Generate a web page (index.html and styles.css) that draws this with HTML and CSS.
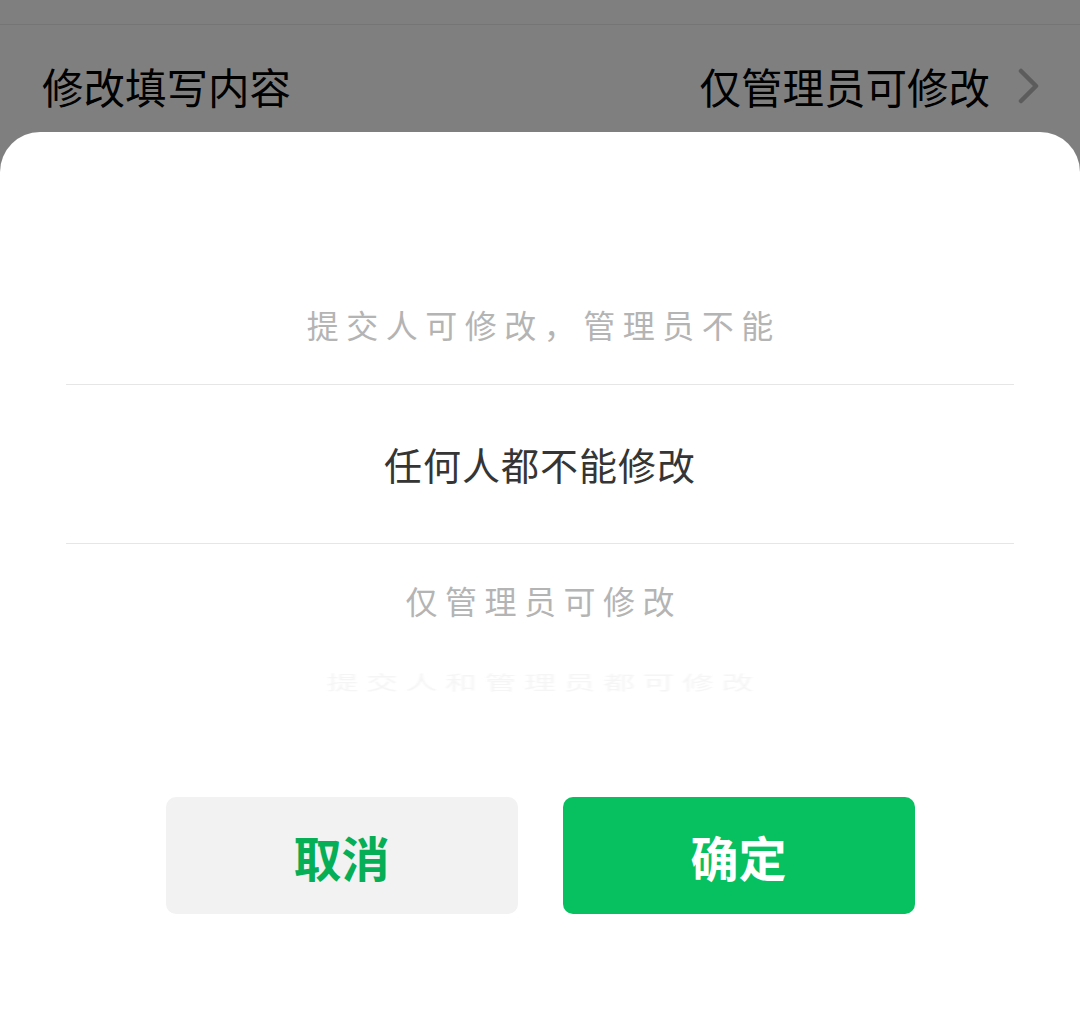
FILE: index.html
```html
<!DOCTYPE html>
<html lang="zh-CN">
<head>
<meta charset="utf-8">
<title>修改填写内容</title>
<link rel="stylesheet" href="styles.css">
</head>
<body>
<div class="screen">
  <div class="backdrop">
    <div class="prev-row"></div>
    <div class="setting-row">
      <span class="setting-label">修改填写内容</span>
      <span class="setting-value">仅管理员可修改
        <svg class="chevron" width="22" height="36" viewBox="0 0 22 36"><polyline points="3,3 18,18 3,33" fill="none" stroke="#5c5c5c" stroke-width="4.5" stroke-linecap="round" stroke-linejoin="round"/></svg>
      </span>
    </div>
  </div>
  <div class="sheet">
    <div class="picker">
      <div class="opt far">提交人可修改，管理员不能</div>
      <div class="opt sel">任何人都不能修改</div>
      <div class="opt far">仅管理员可修改</div>
      <div class="opt faint">提交人和管理员都可修改</div>
    </div>
    <div class="actions">
      <button class="btn cancel">取消</button>
      <button class="btn confirm">确定</button>
    </div>
  </div>
</div>
</body>
</html>
```

FILE: styles.css
```css
html, body {
  margin: 0;
  padding: 0;
}
body {
  width: 1080px;
  height: 1023px;
  overflow: hidden;
  background: #7f7f7f;
  font-family: "Noto Sans CJK SC", "Noto Sans", sans-serif;
}
.screen {
  display: flex;
  flex-direction: column;
  height: 1023px;
}
.backdrop {
  height: 132px;
  background: #7f7f7f;
  display: flex;
  flex-direction: column;
}
.prev-row {
  height: 24px;
  border-bottom: 1px solid #757575;
}
.setting-row {
  flex: 1;
  display: flex;
  align-items: center;
  justify-content: space-between;
  padding: 15px 40px 0 42px;
  font-size: 41.5px;
  color: #000;
}
.setting-value {
  display: flex;
  align-items: center;
  gap: 28px;
}
.chevron {
  display: block;
}
.sheet {
  flex: 1;
  background: #fff;
  border-radius: 40px 40px 0 0;
  padding-top: 136px;
  display: flex;
  flex-direction: column;
}
.picker {
  display: flex;
  flex-direction: column;
  margin: 0 66px;
}
.opt {
  text-align: center;
  white-space: nowrap;
  overflow: hidden;
}
.opt.far {
  height: 116px;
  line-height: 112px;
  font-size: 32px;
  letter-spacing: 7.5px;
  text-indent: 7.5px;
  color: #b4b4b4;
}
.opt.sel {
  height: 160px;
  line-height: 158px;
  box-sizing: border-box;
  border-top: 1px solid #e6e6e6;
  border-bottom: 1px solid #e6e6e6;
  font-size: 38px;
  letter-spacing: 1px;
  color: #353535;
}
.opt.faint {
  height: 44px;
  line-height: 44px;
  font-size: 32px;
  letter-spacing: 7.5px;
  text-indent: 7.5px;
  color: #f5f5f5;
  transform: scaleY(0.6);
  filter: blur(1px);
}
.actions {
  margin-top: 93px;
  display: flex;
  justify-content: center;
  gap: 45px;
}
.btn {
  width: 352px;
  height: 117px;
  border: none;
  border-radius: 10px;
  font-family: "Noto Sans CJK SC", "Noto Sans", sans-serif;
  font-size: 48px;
  font-weight: 700;
  padding: 0;
}
.btn.cancel {
  background: #f2f2f2;
  color: #06ae56;
}
.btn.confirm {
  background: #07c160;
  color: #fff;
}
```
